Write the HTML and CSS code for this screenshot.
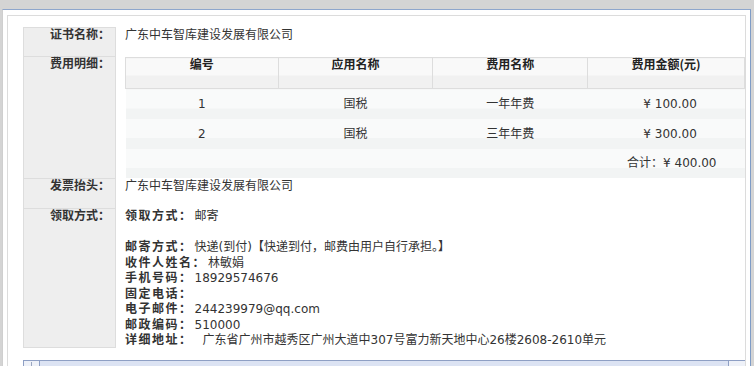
FILE: index.html
```html
<!DOCTYPE html>
<html lang="zh-CN">
<head>
<meta charset="utf-8">
<title>证书详情</title>
<link rel="stylesheet" href="styles.css">
</head>
<body>
<div class="outer">
  <div class="box">
    <div class="form">
      <div class="lab">证书名称：</div>
      <div class="val">广东中车智库建设发展有限公司</div>

      <div class="lab">费用明细：</div>
      <div class="val">
        <table class="fees">
          <thead>
            <tr><th class="c1">编号</th><th class="c2">应用名称</th><th class="c3">费用名称</th><th class="c4">费用金额(元)</th></tr>
          </thead>
          <tbody>
            <tr><td>1</td><td>国税</td><td>一年年费</td><td class="amt">¥ 100.00</td></tr>
            <tr><td>2</td><td>国税</td><td>三年年费</td><td class="amt">¥ 300.00</td></tr>
            <tr class="total"><td colspan="4">合计：¥ 400.00</td></tr>
          </tbody>
        </table>
      </div>

      <div class="lab">发票抬头：</div>
      <div class="val">广东中车智库建设发展有限公司</div>

      <div class="lab lab-last">领取方式：</div>
      <div class="val mail">
        <div class="mail-lines">
          <div class="ln"><b>领取方式：</b>邮寄</div>
          <div class="ln"></div>
          <div class="ln"><b>邮寄方式：</b>快递(到付)【快递到付，邮费由用户自行承担。】</div>
          <div class="ln"><b>收件人姓名：</b>林敏娟</div>
          <div class="ln"><b>手机号码：</b>18929574676</div>
          <div class="ln"><b>固定电话：</b></div>
          <div class="ln"><b>电子邮件：</b>244239979@qq.com</div>
          <div class="ln"><b>邮政编码：</b>510000</div>
          <div class="ln"><b>详细地址：</b><span class="addr">广东省广州市越秀区广州大道中307号富力新天地中心26楼2608-2610单元</span></div>
        </div>
      </div>
    </div>
    <div class="hscroll">
      <span class="sbtn sbtn-left"><span class="tick"></span></span>
      <span class="track"></span>
      <span class="sbtn sbtn-right"></span>
    </div>
  </div>
</div>
</body>
</html>
```

FILE: styles.css
```css
html, body {
  margin: 0;
  padding: 0;
}
body {
  background: #d4d4d4;
  font-family: "DejaVu Sans", "Noto Sans CJK SC", sans-serif;
  font-size: 12px;
  color: #333;
  height: 366px;
  overflow: hidden;
}
.outer {
  box-sizing: border-box;
  margin: 9px 0 0 2px;
  width: 749px;
  height: 357px;
  overflow: hidden;
  background: #fff;
  border-top: 1px solid #8ea6cc;
  border-right: 1px solid #7f9cc6;
  border-left: 1px solid #cfcfcf;
  padding: 5px 0 0 4px;
}
.box {
  box-sizing: border-box;
  width: 739px;
  height: 351px;
  overflow: hidden;
  border: 1px solid #dcdcdc;
  border-bottom: 0;
  padding: 11px 0 0 15px;
}
.form {
  display: grid;
  grid-template-columns: 93px 1fr;
  grid-template-rows: 29px 122px 30px 140px;
}
.lab {
  box-sizing: border-box;
  background: #eeeeee;
  border: 1px solid #dddddd;
  border-bottom: 0;
  text-align: right;
  padding: 0 5px 0 0;
  line-height: 12px;
  font-weight: bold;
  color: #333;
  font-family: "Noto Sans CJK SC", sans-serif;
}
.lab-last {
  border-bottom: 1px solid #dddddd;
}
.val {
  box-sizing: border-box;
  padding: 1px 0 0 9px;
  line-height: 12px;
  font-family: "Noto Sans CJK SC", sans-serif;
}
.fees {
  border-collapse: collapse;
  width: 620px;
  font-family: "DejaVu Sans", "Noto Sans CJK SC", sans-serif;
}
.fees th {
  height: 30px;
  padding: 0;
  border: 1px solid #dddddd;
  vertical-align: top;
  line-height: 12px;
  font-weight: bold;
  color: #222;
  font-family: "Noto Sans CJK SC", sans-serif;
  background: linear-gradient(#f9f9f9 0 17px, #f1f1f1 17px);
}
.fees .c1 { width: 152px; }
.fees .c2 { width: 154px; }
.fees .c3 { width: 154px; }
.fees .c4 { width: 156px; }
.fees td {
  height: 30px;
  padding: 0;
  text-align: center;
  vertical-align: middle;
  line-height: 12px;
  background: linear-gradient(#f9fafa 0 19px, #f2f4f4 19px);
}
.fees .amt {
  padding-left: 8px;
}
.fees .total td {
  height: 29px;
  text-align: right;
  padding-right: 28px;
  vertical-align: top;
  padding-top: 8px;
  box-sizing: border-box;
}
.mail {
  padding-top: 1px;
}
.mail-lines {
  margin-top: -2px;
  font-family: "DejaVu Sans", "Noto Sans CJK SC", sans-serif;
}
.ln {
  height: 15.5px;
  line-height: 15.5px;
  white-space: nowrap;
}
.ln b {
  font-family: "Noto Sans CJK SC", sans-serif;
  letter-spacing: 1.5px;
  margin-right: 2px;
  color: #333;
}
.addr {
  margin-left: 8px;
}
.hscroll {
  display: flex;
  margin-top: 12px;
  width: 722px;
  height: 8px;
  border-top: 1px solid #8e9fc4;
  background: #dce3f3;
}
.sbtn {
  width: 17px;
  box-sizing: border-box;
  background: #eef1f8;
  position: relative;
}
.sbtn-left {
  border-left: 1px solid #8e9fc4;
  border-right: 1px solid #8e9fc4;
}
.sbtn-right {
  border-left: 1px solid #8e9fc4;
}
.tick {
  position: absolute;
  left: 7px;
  top: 1px;
  width: 1px;
  height: 4px;
  background: #9aa6c0;
}
.track {
  flex: 1;
}
```
